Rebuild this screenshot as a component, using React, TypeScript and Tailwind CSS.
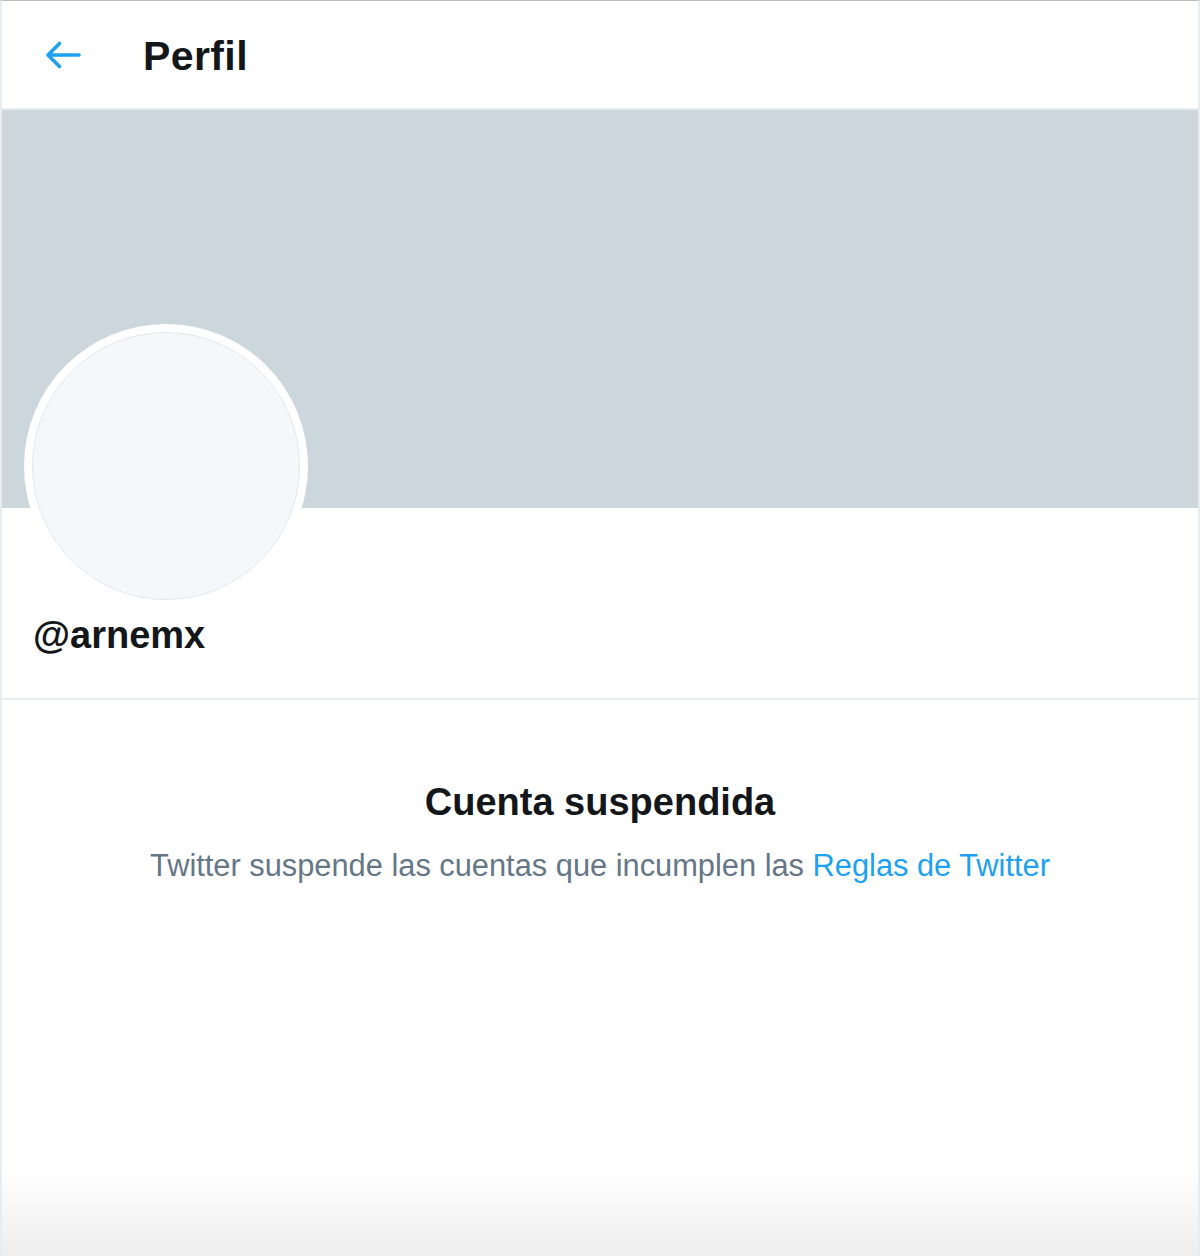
import React from "react";

const font = { fontFamily: '"Liberation Sans", Arial, sans-serif' };

const BackArrow: React.FC = () => (
  <svg width="40" height="40" viewBox="0 0 40 40" fill="none" className="shrink-0">
    <path
      d="M37 20H6M17.5 8.5L6 20l11.5 11.5"
      stroke="#1da1f2"
      strokeWidth="3.6"
      strokeLinecap="round"
      strokeLinejoin="round"
    />
  </svg>
);

const App: React.FC = () => {
  return (
    <div
      className="h-[1256px] w-[1200px] flex flex-col bg-white border-t border-t-[#bdbdbd] border-x-2 border-x-[#e6ecf0] text-[#14171a] overflow-hidden"
      style={font}
    >
      {/* Header */}
      <header className="h-[109px] shrink-0 flex items-center border-b-2 border-[#e6ecf0]">
        <div className="ml-[40px] w-[101px] flex items-center">
          <BackArrow />
        </div>
        <h1 className="mt-[3px] text-[41px] font-extrabold leading-none tracking-[0.4px]">Perfil</h1>
      </header>

      {/* Banner */}
      <div className="h-[398px] shrink-0 bg-[#ccd6dd]" />

      {/* Profile */}
      <section className="h-[192px] shrink-0 px-[22px] border-b-2 border-[#e6ecf0]">
        <div className="-mt-[184px] w-[284px] h-[284px] rounded-full bg-white p-[8px]">
          <div className="w-full h-full rounded-full bg-[#f5f8fa] border border-[#e1e8ed]" />
        </div>
        <p className="mt-[8px] pl-[9px] text-[38px] font-bold leading-none">@arnemx</p>
      </section>

      {/* Suspended message */}
      <section className="pt-[83px] flex flex-col items-center text-center">
        <h2 className="text-[38px] font-bold leading-none">Cuenta suspendida</h2>
        <p className="mt-[30px] text-[30.8px] leading-none text-[#657786]">
          Twitter suspende las cuentas que incumplen las{" "}
          <a href="#" className="text-[#1da1f2]">
            Reglas de Twitter
          </a>
        </p>
      </section>

      <div className="flex-1 flex flex-col justify-end">
        <div className="h-[90px] bg-gradient-to-b from-white to-[#eeeeee]" />
      </div>
    </div>
  );
};

export default App;
